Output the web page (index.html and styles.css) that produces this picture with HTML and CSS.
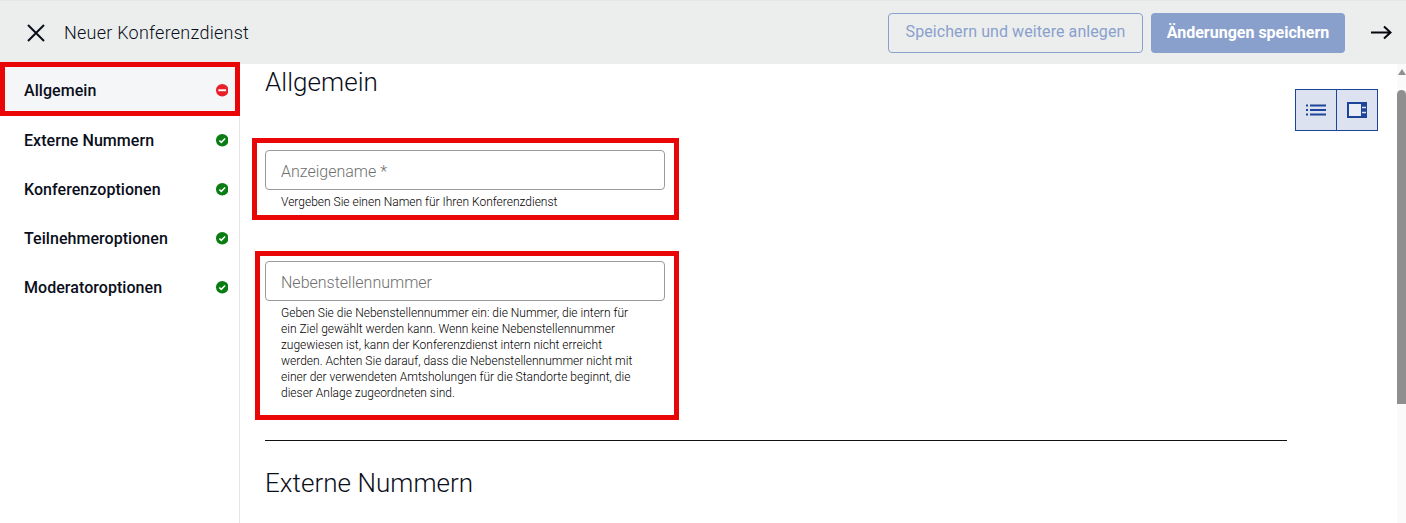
FILE: index.html
```html
<!DOCTYPE html>
<html lang="de">
<head>
<meta charset="utf-8">
<title>Neuer Konferenzdienst</title>
<link rel="stylesheet" href="styles.css">
</head>
<body>
<div class="app">
  <header class="topbar">
    <div class="topbar-left">
      <svg class="close-icon" width="20" height="20" viewBox="0 0 20 20"><path d="M2 2 18 18M18 2 2 18" fill="none" stroke="#0a0e1a" stroke-width="2"/></svg>
      <span class="title">Neuer Konferenzdienst</span>
    </div>
    <div class="topbar-right">
      <button class="btn btn-outline">Speichern und weitere anlegen</button>
      <button class="btn btn-filled">Änderungen speichern</button>
      <svg class="next-icon" width="22" height="16" viewBox="0 0 22 16"><path d="M1 7.500H20M14 1.500 20.500 7.500 14 13.500" fill="none" stroke="#05070d" stroke-width="2"/></svg>
    </div>
  </header>
  <div class="workspace">
    <nav class="sidebar">
      <a class="nav-item active">Allgemein
        <svg class="status" viewBox="0 0 13 13"><circle cx="6.500" cy="6.500" r="6.500" fill="#e8202a"/><rect x="2.500" y="5.500" width="8" height="2" fill="#fff"/></svg>
      </a>
      <a class="nav-item">Externe Nummern
        <svg class="status" viewBox="0 0 13 13"><circle cx="6.500" cy="6.500" r="6.500" fill="#0a7d12"/><path d="M3.500 6.800 5.500 8.700 9.500 4.700" fill="none" stroke="#fff" stroke-width="1.600"/></svg>
      </a>
      <a class="nav-item">Konferenzoptionen
        <svg class="status" viewBox="0 0 13 13"><circle cx="6.500" cy="6.500" r="6.500" fill="#0a7d12"/><path d="M3.500 6.800 5.500 8.700 9.500 4.700" fill="none" stroke="#fff" stroke-width="1.600"/></svg>
      </a>
      <a class="nav-item">Teilnehmeroptionen
        <svg class="status" viewBox="0 0 13 13"><circle cx="6.500" cy="6.500" r="6.500" fill="#0a7d12"/><path d="M3.500 6.800 5.500 8.700 9.500 4.700" fill="none" stroke="#fff" stroke-width="1.600"/></svg>
      </a>
      <a class="nav-item">Moderatoroptionen
        <svg class="status" viewBox="0 0 13 13"><circle cx="6.500" cy="6.500" r="6.500" fill="#0a7d12"/><path d="M3.500 6.800 5.500 8.700 9.500 4.700" fill="none" stroke="#fff" stroke-width="1.600"/></svg>
      </a>
    </nav>
    <main class="content">
      <div class="content-head">
        <h2 class="section-title">Allgemein</h2>
        <div class="view-toggle">
          <button class="toggle-btn">
            <svg width="20" height="12" viewBox="0 0 20 12"><path d="M0 1.500H2M0 6H2M0 10.500H2M4 1.500H20M4 6H20M4 10.500H20" stroke="#1c4499" stroke-width="2"/></svg>
          </button>
          <button class="toggle-btn">
            <svg width="20" height="16" viewBox="0 0 20 16"><rect x="1" y="1" width="18" height="14" fill="#e9edf5" stroke="#1c4499" stroke-width="2"/><rect x="14" y="1" width="5" height="14" fill="#1c4499"/><path d="M15 5.500H19M15 10.500H19" stroke="#dce2ef" stroke-width="1.600"/></svg>
          </button>
        </div>
      </div>
      <div class="field">
        <input class="field-input" placeholder="Anzeigename *">
        <p class="field-help">Vergeben Sie einen Namen für Ihren Konferenzdienst</p>
      </div>
      <div class="field">
        <input class="field-input" placeholder="Nebenstellennummer">
        <p class="field-help">Geben Sie die Nebenstellennummer ein: die Nummer, die intern für ein Ziel gewählt werden kann. Wenn keine Nebenstellennummer zugewiesen ist, kann der Konferenzdienst intern nicht erreicht werden. Achten Sie darauf, dass die Nebenstellennummer nicht mit einer der verwendeten Amtsholungen für die Standorte beginnt, die dieser Anlage zugeordneten sind.</p>
      </div>
      <hr class="rule">
      <h2 class="section-title">Externe Nummern</h2>
    </main>
    <div class="scrollbar">
      <span class="scroll-arrow"></span>
      <span class="scroll-thumb"></span>
    </div>
  </div>
  <div class="mark mark-nav"></div>
  <div class="mark mark-name"></div>
  <div class="mark mark-ext"></div>
</div>
</body>
</html>
```
FILE: styles.css
```css
* { box-sizing: border-box; }
html, body { margin: 0; height: 100%; overflow: hidden; background: #fff; }
body { font-family: Roboto, "Liberation Sans", sans-serif; color: #0a0e1a; }
.app { position: relative; display: flex; flex-direction: column; height: 523px; }

.topbar { flex: none; height: 64px; background: #eceeee; border-top: 1px solid #e4e6e8; display: flex; align-items: center; justify-content: space-between; padding: 0 14px 0 26px; }
.topbar-left { display: flex; align-items: center; gap: 18px; }
.title { font-size: 18px; font-weight: 300; letter-spacing: .25px; color: #0a0e1a; }
.close-icon { display: block; }
.topbar-right { display: flex; align-items: center; }
.btn { height: 40px; border-radius: 4px; font-family: Roboto, sans-serif; font-size: 16px; padding: 0; }
.btn-outline { width: 255px; padding-bottom: 2px; background: transparent; border: 1px solid #8aa0cc; color: #8aa0cc; letter-spacing: .08px; }
.btn-filled { width: 194px; margin-left: 8px; background: #8aa0cc; border: 0; color: #fff; font-weight: 700; }
.next-icon { margin-left: 25px; display: block; }

.workspace { flex: 1; min-height: 0; display: flex; }
.sidebar { flex: none; width: 240px; border-right: 1px solid #e6e6e6; padding-top: 1px; }
.nav-item { display: flex; align-items: center; justify-content: space-between; height: 49px; padding: 0 11px 0 24px; font-size: 16px; font-weight: 500; letter-spacing: .05px; color: #0a0e1a; }
.nav-item.active { height: 51px; background: #f5f6f8; }
.status { width: 12.500px; height: 12.500px; display: block; }

.content { flex: 1; min-width: 0; padding: 0 19px 0 25px; overflow: hidden; }
.content-head { display: flex; justify-content: space-between; align-items: flex-start; height: 86px; }
.section-title { margin: 0; font-size: 26px; font-weight: 300; line-height: 36px; letter-spacing: .05px; color: #0a0e1a; }
.view-toggle { display: flex; margin-top: 25px; height: 42px; border: 1px solid #1c4499; background: #dce2ef; }
.toggle-btn { width: 40px; padding: 0; border: 0; background: transparent; display: flex; align-items: center; justify-content: center; }
.toggle-btn + .toggle-btn { width: 41px; border-left: 1px solid #1c4499; }

.field { width: 400px; margin-bottom: 51px; }
.field-input { display: block; width: 100%; height: 40px; padding: 2px 15px 0; border: 1px solid #9a9a9a; border-radius: 4px; background: #fff; font-family: Roboto, sans-serif; font-size: 16px; font-weight: 300; color: #0a0e1a; outline: none; }
.field-input::placeholder { color: #6f6f6f; opacity: 1; }
.field-help { margin: 4px 0 0; padding: 0 26px 0 16px; font-size: 12px; font-weight: 300; line-height: 16px; color: #000; }
.field:nth-of-type(3) { margin-bottom: 0; }

.rule { width: 1022px; height: 1px; margin: 39px 0 24px; border: 0; background: #111; }

.scrollbar { flex: none; width: 9px; background: #fafafa; display: flex; flex-direction: column; align-items: center; }
.scroll-arrow { margin-top: 5px; border-left: 4.500px solid transparent; border-right: 4.500px solid transparent; border-bottom: 6px solid #8f8f8f; }
.scroll-thumb { margin-top: 15px; width: 9px; height: 314px; background: #8f8f8f; border-radius: 5px 5px 0 0; }

.mark { position: absolute; border: 5px solid #e90606; pointer-events: none; }
.mark-nav { left: 0; top: 62px; width: 240px; height: 54px; }
.mark-name { left: 252px; top: 138px; width: 427px; height: 82px; }
.mark-ext { left: 255px; top: 251px; width: 424px; height: 169px; }
```
